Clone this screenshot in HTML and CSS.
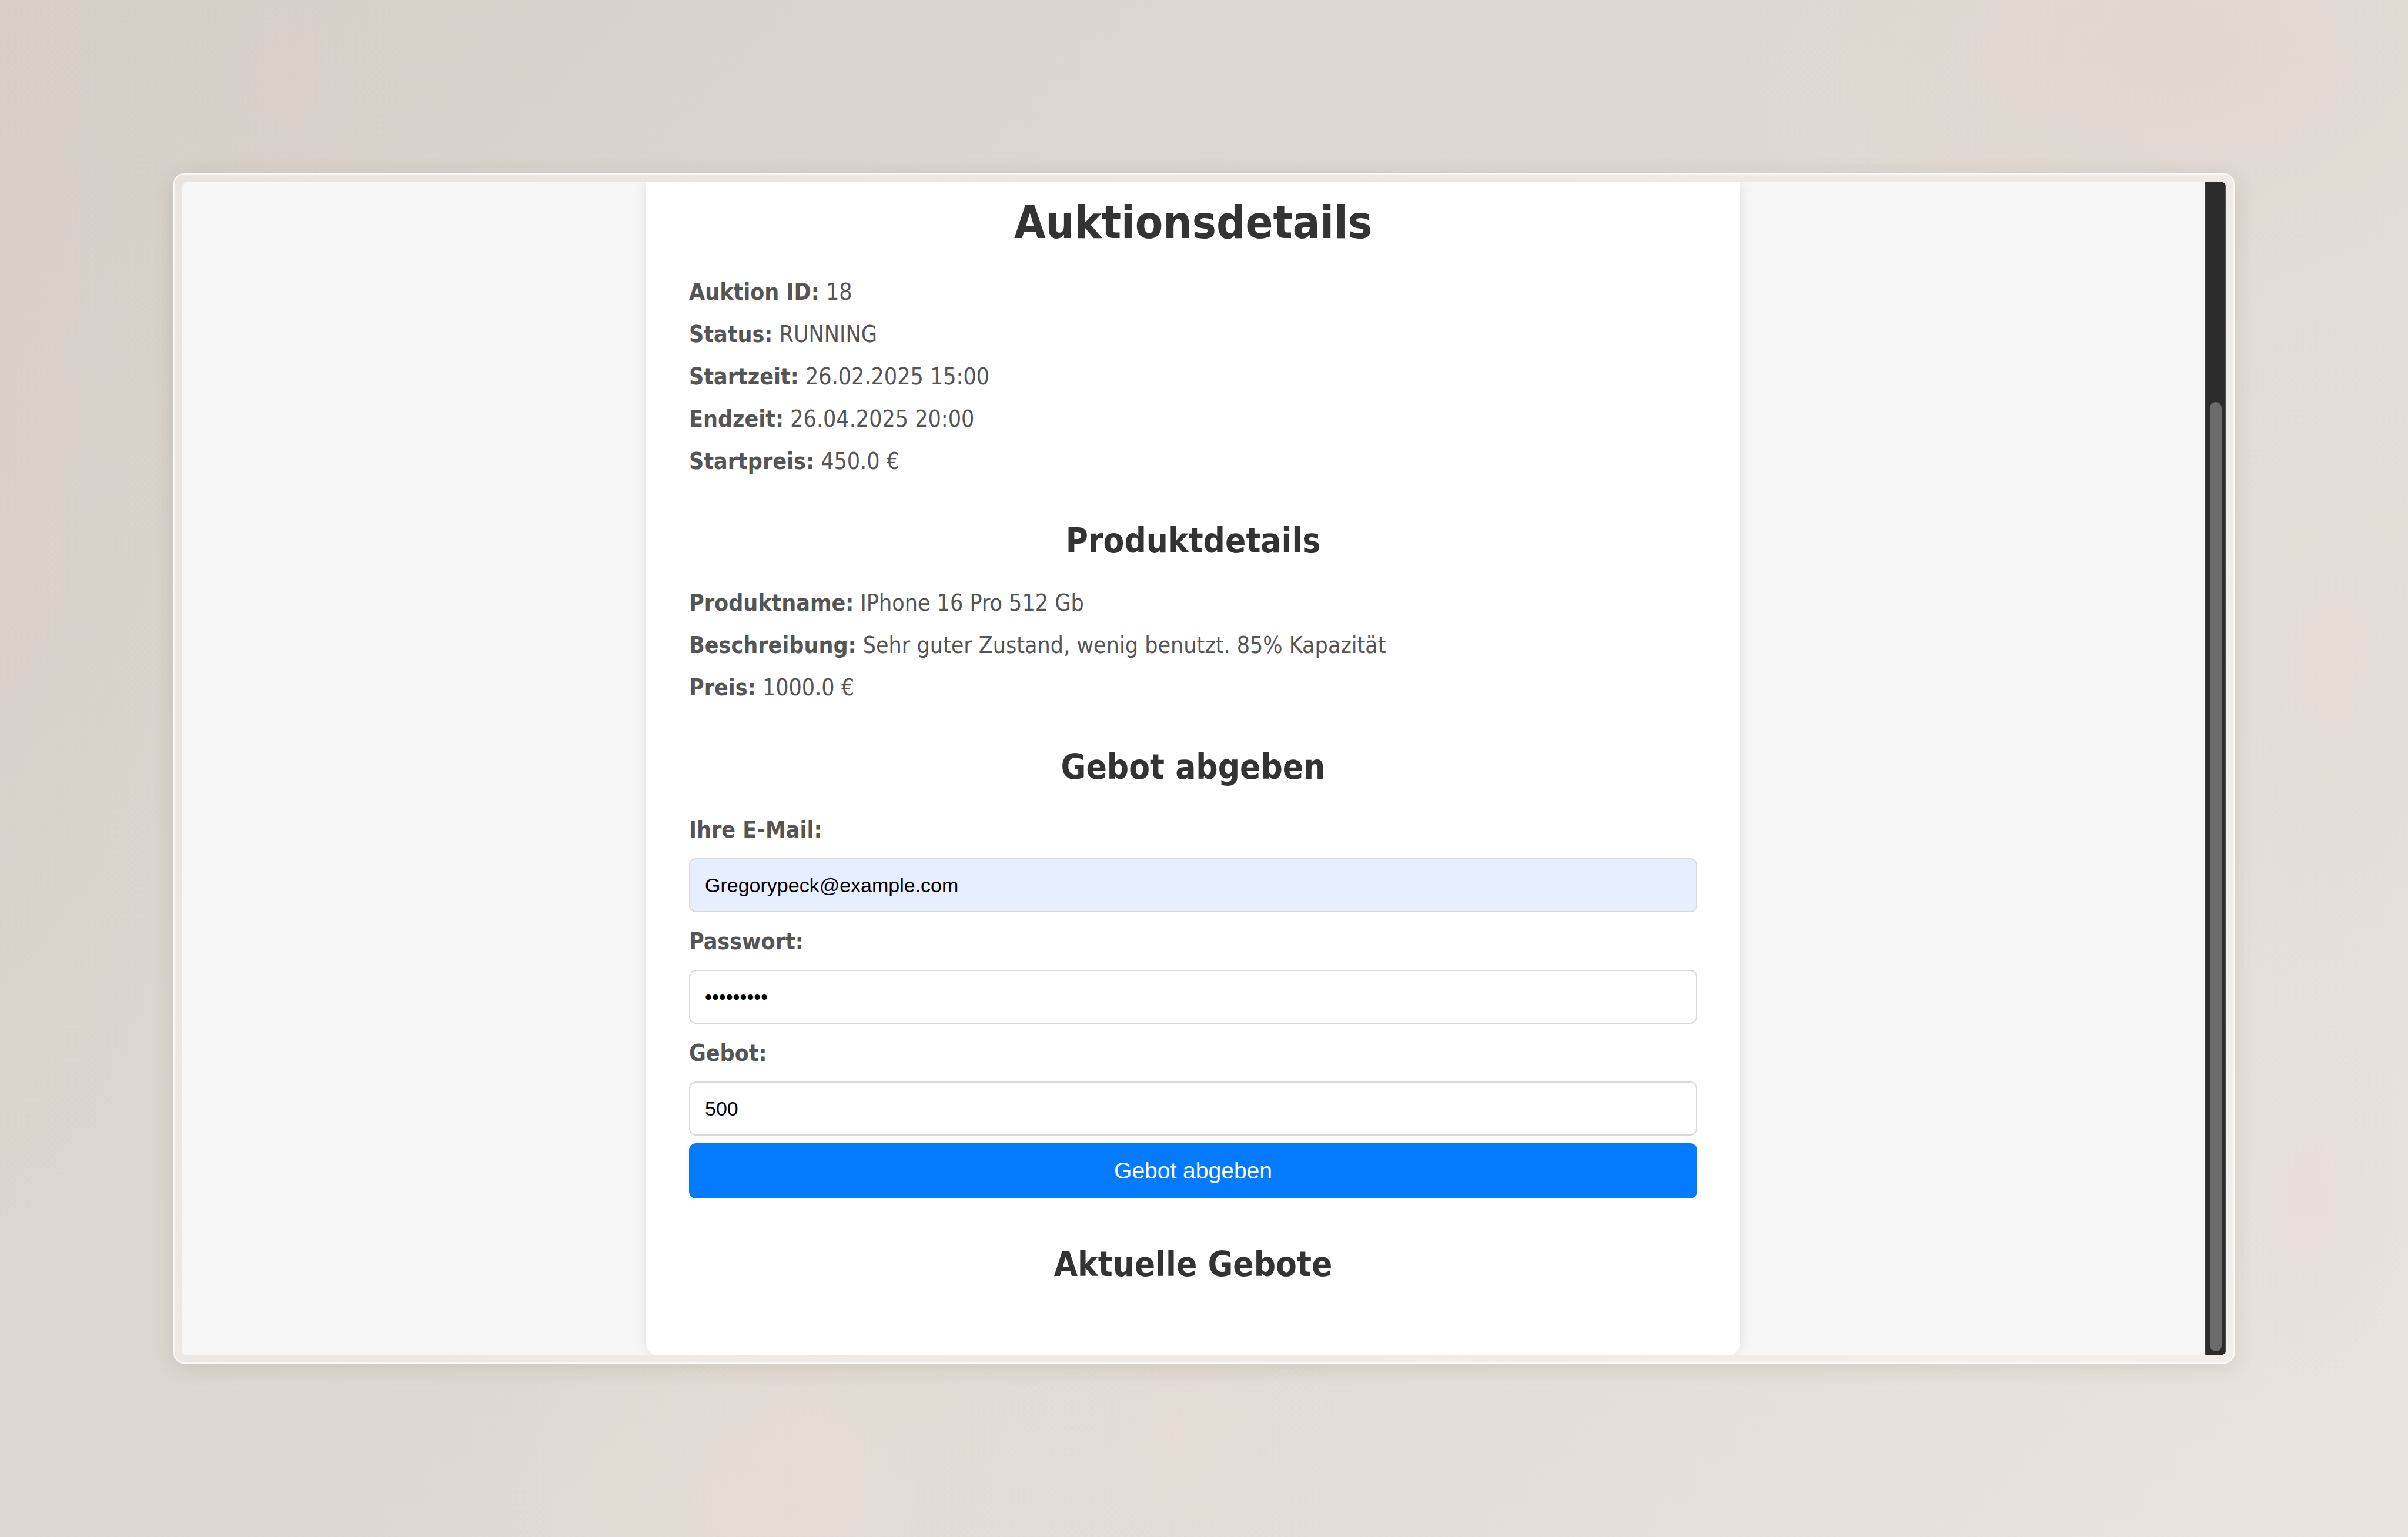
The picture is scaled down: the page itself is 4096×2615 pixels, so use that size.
FILE: index.html
```html
<!DOCTYPE html>
<html lang="de">
<head>
<meta charset="utf-8">
<meta name="viewport" content="width=device-width, initial-scale=1">
<title>Auktionsdetails</title>
<link rel="stylesheet" href="styles.css">
</head>
<body class="backdrop">
<div class="frame">
  <div class="screen">
    <div class="page">
      <main class="card">
        <h1 class="title">Auktionsdetails</h1>
        <section>
          <p class="row"><strong>Auktion ID:</strong> <span>18</span></p>
          <p class="row"><strong>Status:</strong> <span>RUNNING</span></p>
          <p class="row"><strong>Startzeit:</strong> <span>26.02.2025 15:00</span></p>
          <p class="row"><strong>Endzeit:</strong> <span>26.04.2025 20:00</span></p>
          <p class="row"><strong>Startpreis:</strong> <span>450.0 €</span></p>
        </section>
        <section>
          <h2 class="subtitle">Produktdetails</h2>
          <p class="row"><strong>Produktname:</strong> <span>IPhone 16 Pro 512 Gb</span></p>
          <p class="row"><strong>Beschreibung:</strong> <span>Sehr guter Zustand, wenig benutzt. 85% Kapazität</span></p>
          <p class="row"><strong>Preis:</strong> <span>1000.0 €</span></p>
        </section>
        <section>
          <h2 class="subtitle">Gebot abgeben</h2>
          <form class="bid-form">
            <label class="label" for="email">Ihre E-Mail:</label>
            <input class="field field-filled" type="email" id="email" value="Gregorypeck@example.com">
            <label class="label" for="password">Passwort:</label>
            <input class="field" type="password" id="password" value="geheim123">
            <label class="label" for="amount">Gebot:</label>
            <input class="field" type="number" id="amount" value="500">
            <button class="submit" type="button">Gebot abgeben</button>
          </form>
        </section>
        <section>
          <h2 class="subtitle">Aktuelle Gebote</h2>
        </section>
      </main>
    </div>
    <div class="scrollbar"><div class="thumb"></div></div>
  </div>
</div>
</body>
</html>
```

FILE: styles.css
```css
* {
  box-sizing: border-box;
}

.backdrop {
  margin: 0;
  min-height: 100vh;
  padding: 295px;
  display: flex;
  font-family: "DejaVu Sans Condensed", "DejaVu Sans", sans-serif;
  background:
    radial-gradient(ellipse 8% 60% at 0% 25%, rgba(220, 206, 201, 0.5), rgba(220, 206, 201, 0)),
    radial-gradient(ellipse 5% 12% at 12% 5%, rgba(220, 206, 201, 0.4), rgba(220, 206, 201, 0)),
    radial-gradient(ellipse 18% 18% at 90% 3%, rgba(226, 214, 208, 0.8), rgba(226, 214, 208, 0)),
    radial-gradient(ellipse 7% 24% at 97% 44%, rgba(230, 220, 214, 0.8), rgba(230, 220, 214, 0)),
    radial-gradient(ellipse 4% 12% at 96% 78%, rgba(232, 221, 218, 0.8), rgba(232, 221, 218, 0)),
    radial-gradient(ellipse 12% 16% at 33% 97%, rgba(230, 219, 213, 0.8), rgba(230, 219, 213, 0)),
    radial-gradient(ellipse 7% 12% at 49% 93%, rgba(230, 219, 213, 0.6), rgba(230, 219, 213, 0)),
    linear-gradient(135deg, #d5cfc8, #dedad3 50%, #e9e4de);
}

.frame {
  flex: 1;
  display: flex;
  padding: 12px;
  border: 2px solid #fbf8f5;
  border-radius: 18px;
  background: linear-gradient(135deg, #e8e4e1, #f1eeeb);
  box-shadow: 0 6px 36px rgba(60, 50, 40, 0.12);
}

.screen {
  flex: 1;
  display: flex;
  overflow: hidden;
  border-radius: 10px;
  background: #f7f7f7;
}

.page {
  flex: 1;
  display: flex;
  justify-content: center;
}

.card {
  width: 100%;
  max-width: 1861px;
  margin-bottom: -2px;
  padding: 22px 73px;
  border-radius: 0 0 24px 24px;
  background: #fff;
  color: #555;
  font-size: 39px;
  box-shadow: 0 0 24px rgba(0, 0, 0, 0.1);
}

.title,
.subtitle {
  color: #333;
  text-align: center;
}

.title {
  margin: 0 0 34px;
  font-size: 77px;
  line-height: 96px;
}

.subtitle {
  margin: 63px 0 34px;
  font-size: 58px;
  line-height: 72px;
}

.row {
  margin: 0;
  line-height: 72px;
}

.bid-form {
  display: flex;
  flex-direction: column;
  padding-bottom: 13px;
}

.label {
  font-weight: bold;
  line-height: 74px;
}

.field {
  height: 92px;
  margin: 11px 0 13px;
  padding: 0 25px;
  border: 2px solid #d9d9d9;
  border-radius: 12px;
  background: #fff;
  color: #000;
  font: 34px "Liberation Sans", Arial, sans-serif;
}

.field-filled {
  background: #e6efff;
}

.submit {
  height: 94px;
  padding: 0;
  border: 0;
  border-radius: 12px;
  background: #047bff;
  color: #fff;
  font: 39px "Liberation Sans", Arial, sans-serif;
}

.scrollbar {
  display: flex;
  justify-content: center;
  width: 37px;
  padding: 375px 0 7px;
  border-left: 3px solid #3e4040;
  border-right: 3px solid #55514e;
  background: #2c2c2c;
}

.thumb {
  width: 20px;
  border-radius: 10px;
  background: #6b6b6b;
}
```
